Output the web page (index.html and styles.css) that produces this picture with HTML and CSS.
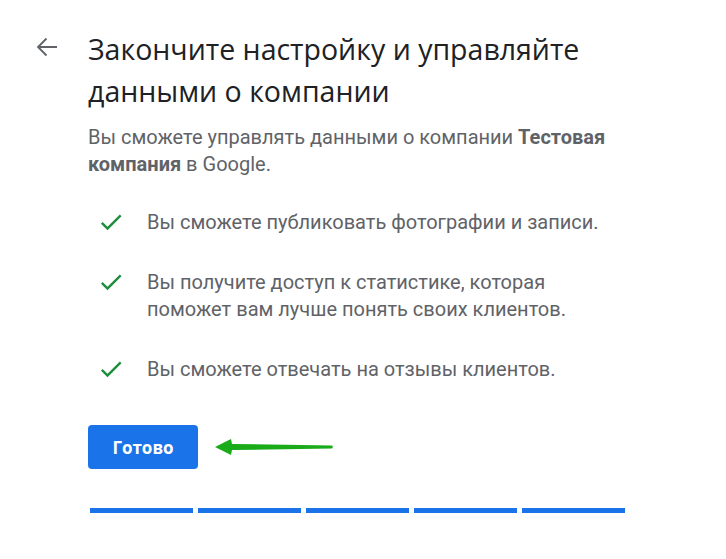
FILE: index.html
```html
<!DOCTYPE html>
<html lang="ru">
<head>
<meta charset="utf-8">
<link rel="stylesheet" href="styles.css">
</head>
<body>
<div class="page">
  <div class="header">
    <div class="back">
      <svg width="22" height="22" viewBox="0 0 22 22"><path d="M21 11H2.5M10.5 2.5L2 11l8.5 8.5" fill="none" stroke="#5f6368" stroke-width="1.8"/></svg>
    </div>
    <h1 class="title">Закончите настройку и управляйте данными о компании</h1>
  </div>
  <div class="content">
    <p class="lead">Вы сможете управлять данными о компании <b>Тестовая компания</b> в Google.</p>
    <ul class="list">
      <li class="item">
        <svg class="check" width="28" height="28" viewBox="0 0 24 24"><path d="M9 16.17L4.83 12l-1.42 1.41L9 19 21 7l-1.41-1.41z" fill="#1e8e3e"/></svg>
        <span>Вы сможете публиковать фотографии и записи.</span>
      </li>
      <li class="item">
        <svg class="check" width="28" height="28" viewBox="0 0 24 24"><path d="M9 16.17L4.83 12l-1.42 1.41L9 19 21 7l-1.41-1.41z" fill="#1e8e3e"/></svg>
        <span>Вы получите доступ к статистике, которая поможет вам лучше понять своих клиентов.</span>
      </li>
      <li class="item">
        <svg class="check" width="28" height="28" viewBox="0 0 24 24"><path d="M9 16.17L4.83 12l-1.42 1.41L9 19 21 7l-1.41-1.41z" fill="#1e8e3e"/></svg>
        <span>Вы сможете отвечать на отзывы клиентов.</span>
      </li>
    </ul>
    <div class="actions">
      <button class="btn">Готово</button>
      <svg class="arrow" width="120" height="20" viewBox="0 0 120 20"><path d="M118 8.4 Q119.6 10 118 11.6 L18 13 L17 18 L1 10 L17 2 L18 7 Z" fill="#1aab1a"/></svg>
    </div>
    <div class="progress">
      <span class="bar"></span><span class="bar"></span><span class="bar"></span><span class="bar"></span><span class="bar"></span>
    </div>
  </div>
</div>
</body>
</html>
```
FILE: styles.css
```css
html, body { margin: 0; padding: 0; background: #fff; }
body { font-family: Roboto, "Noto Sans", sans-serif; width: 726px; height: 559px; overflow: hidden; }
.page { padding: 28px 0 0 36px; }
.header { display: flex; align-items: flex-start; }
.back { width: 22px; height: 22px; margin-top: 8px; display: flex; align-items: center; justify-content: center; }
.title {
  margin: 0 0 0 30px;
  font-family: "Open Sans", Roboto, sans-serif;
  font-weight: 400;
  font-size: 28.5px;
  line-height: 42px;
  color: #202124;
  width: 560px;
}
.content { padding-left: 52px; }
.lead {
  margin: 12px 0 0 0;
  font-size: 20px;
  line-height: 27px;
  color: #5f6368;
  width: 540px;
}
.lead b { font-weight: 700; }
.list { list-style: none; margin: 31px 0 0 0; padding: 0; }
.item { display: flex; align-items: flex-start; margin-bottom: 33px; font-size: 20px; line-height: 27px; color: #5f6368; }
.item:last-child { margin-bottom: 0; }
.check { margin: -1px 22px 0 9px; flex: none; }
.item span { width: 470px; }
.actions { display: flex; align-items: center; margin-top: 42px; }
.btn {
  width: 110px; height: 44px;
  background: #1a73e8; color: #fff; border: none; border-radius: 4px;
  font-family: "Open Sans", Roboto, sans-serif; font-weight: 700; font-size: 17px;
  padding: 0;
}
.arrow { margin-left: 16px; }
.progress { display: flex; gap: 5px; margin-top: 39px; margin-left: 2px; }
.bar { width: 103px; height: 5px; background: #1a73e8; }
```
